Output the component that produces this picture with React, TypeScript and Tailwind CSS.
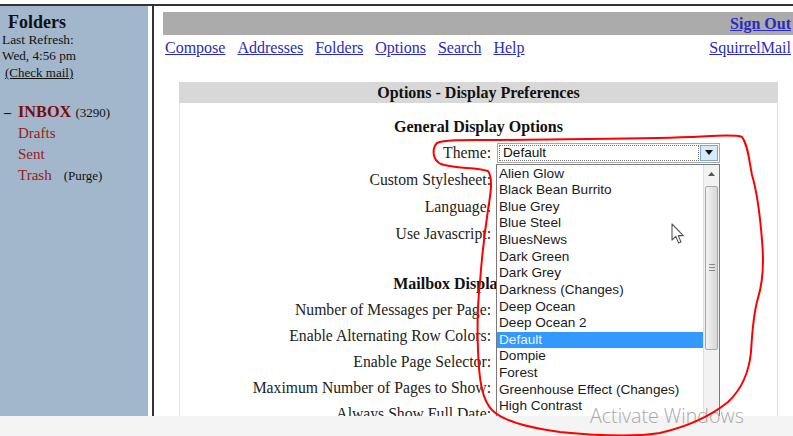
import React from "react";

const themes = [
  "Alien Glow",
  "Black Bean Burrito",
  "Blue Grey",
  "Blue Steel",
  "BluesNews",
  "Dark Green",
  "Dark Grey",
  "Darkness (Changes)",
  "Deep Ocean",
  "Deep Ocean 2",
  "Default",
  "Dompie",
  "Forest",
  "Greenhouse Effect (Changes)",
  "High Contrast",
  "Ice Fire",
  "In The Pink",
];

const serif = { fontFamily: '"Liberation Serif", "Times New Roman", serif' };
const sans = { fontFamily: '"Liberation Sans", Arial, sans-serif' };

function Label({ children }: { children: React.ReactNode }) {
  return (
    <div className="flex h-[26px] items-center">
      <div className="w-[311px] text-right text-[15.7px] text-[#222]">{children}</div>
    </div>
  );
}

function Label27({ children, extra }: { children: React.ReactNode; extra?: React.ReactNode }) {
  return (
    <div className="flex h-[27px] items-center">
      <div className="w-[311px] text-right text-[15.7px] text-[#222]">{children}</div>
      {extra}
    </div>
  );
}

function ThemeSelect() {
  return (
    <div className="relative ml-[6px] h-[20px] w-[223px] border border-[#a8a8a8] bg-white" style={sans}>
      <div className="absolute left-[1px] top-[1px] bottom-[1px] right-[20px] border border-dotted border-[#777] pl-[3px] text-[13.6px] leading-[14px] text-[#111]">
        Default
      </div>
      <div className="absolute right-[1px] top-[1px] bottom-[1px] flex w-[18px] items-center justify-center border border-[#7fa6cc] bg-[#d8e9f8]">
        <svg width="8" height="5" viewBox="0 0 8 5">
          <path d="M0 0 L8 0 L4 5 Z" fill="#111" />
        </svg>
      </div>
      <div className="absolute left-[-2px] top-[20px] flex h-[300px] w-[224px] border border-[#7a7a7a] bg-white">
        <div className="flex-1 pt-[1px]">
          {themes.map((t) => (
            <div
              key={t}
              className={
                "h-[16.64px] pl-[2px] text-[13.6px] leading-[16.64px] " +
                (t === "Default" ? "bg-[#3399ff] text-[#e8f2ff]" : "text-[#1a1a1a]")
              }
            >
              {t}
            </div>
          ))}
        </div>
        <div className="flex w-[16px] flex-col border-l border-[#e0e0e0] bg-[#f2f2f2]">
          <div className="flex h-[18px] items-center justify-center">
            <svg width="7" height="4" viewBox="0 0 7 4">
              <path d="M0 4 L7 4 L3.5 0 Z" fill="#555" />
            </svg>
          </div>
          <div className="mx-[1px] mt-[3px] flex h-[164px] items-center justify-center rounded-[2px] border border-[#a6a6a6] bg-gradient-to-r from-[#f4f4f4] to-[#d6d6d6]">
            <div className="flex flex-col gap-[2px]">
              <div className="h-px w-[6px] bg-[#888]" />
              <div className="h-px w-[6px] bg-[#888]" />
              <div className="h-px w-[6px] bg-[#888]" />
            </div>
          </div>
        </div>
      </div>
    </div>
  );
}

export default function App() {
  return (
    <div className="relative h-[436px] w-[793px] overflow-hidden bg-white" style={serif}>
      <div className="h-[4px] bg-white" />
      <div className="h-[2px] bg-[#333]" />
      <div className="flex h-[410px]">
        <aside className="w-[148px] bg-[#a2b7cb] text-[#111]">
          <div className="mt-[6px] h-[20px] pl-[8px] text-[18px] font-bold leading-[20px]">Folders</div>
          <div className="h-[16px] pl-[2px] text-[13.4px] leading-[16px]">Last Refresh:</div>
          <div className="h-[16px] pl-[2px] text-[13.2px] leading-[16px]">Wed, 4:56 pm</div>
          <div className="mt-[1px] h-[16px] pl-[5px] text-[13px] leading-[16px]">
            <span className="underline">(Check mail)</span>
          </div>
          <div className="mt-[21px] flex h-[21px] items-center">
            <span className="w-[18px] pl-[4px] text-[14px] font-bold">–</span>
            <span className="text-[16.3px] font-bold text-[#7a0c0c]">INBOX</span>
            <span className="ml-[4px] text-[13px]">(3290)</span>
          </div>
          <div className="flex h-[21px] items-center pl-[18px] text-[15px] text-[#981a1a]">Drafts</div>
          <div className="flex h-[21px] items-center pl-[18px] text-[15px] text-[#981a1a]">Sent</div>
          <div className="flex h-[21px] items-center pl-[18px]">
            <span className="text-[15px] text-[#981a1a]">Trash</span>
            <span className="ml-[12px] text-[13px]">(Purge)</span>
          </div>
        </aside>
        <div className="w-[4px] bg-white" />
        <div className="w-[2px] bg-[#333]" />
        <main className="relative flex-1 overflow-hidden">
          <div className="ml-[9px] mt-[6px] flex h-[23px] items-center justify-end bg-[#ababab] pr-[2px]">
            <span className="text-[16px] font-bold text-[#2a2ac4] underline">Sign Out</span>
          </div>
          <div className="ml-[11px] mt-[4px] flex h-[18px] items-center pr-[2px] text-[16px] leading-[18px] text-[#2a2ac4]">
            <div className="flex gap-[12px]">
              <span className="underline">Compose</span>
              <span className="underline">Addresses</span>
              <span className="underline">Folders</span>
              <span className="underline">Options</span>
              <span className="underline">Search</span>
              <span className="underline">Help</span>
            </div>
            <span className="ml-auto underline">SquirrelMail</span>
          </div>
          <div className="ml-[25px] mt-[25px] w-[599px]">
            <div className="h-[21px] bg-[#d8d8d8] text-center text-[16px] font-bold leading-[21px] text-[#111]">
              Options - Display Preferences
            </div>
            <div className="h-[400px] border-x border-[#e2e2ea] pt-[12px]">
              <div className="flex h-[24px] items-center justify-center text-[16px] font-bold text-[#111]">
                General Display Options
              </div>
              <Label27 extra={<ThemeSelect />}>Theme:</Label27>
              <Label27>Custom Stylesheet:</Label27>
              <Label27>Language:</Label27>
              <Label27>Use Javascript:</Label27>
              <div className="h-[24px]" />
              <div className="flex h-[26px] items-center justify-center text-[16px] font-bold text-[#111]">
                Mailbox Display Options
              </div>
              <Label>Number of Messages per Page:</Label>
              <Label>Enable Alternating Row Colors:</Label>
              <Label>Enable Page Selector:</Label>
              <Label>Maximum Number of Pages to Show:</Label>
              <Label>Always Show Full Date:</Label>
            </div>
          </div>
        </main>
      </div>
      <div className="h-[20px] bg-[#f4f4f4]" />

      <div
        className="absolute left-[590px] top-[402px] text-[19.6px] font-light leading-[28px] text-[#a9a9a9]"
        style={{ fontFamily: '"Open Sans", "Liberation Sans", sans-serif' }}
      >
        Activate Windows
      </div>

      <svg className="pointer-events-none absolute left-[671px] top-[223px]" width="14" height="22" viewBox="0 0 14 22">
        <path d="M1 1 L1 17 L4.8 13.4 L7.6 20 L10 19 L7.3 12.6 L12.3 12.6 Z" fill="#fff" stroke="#555" strokeWidth="1.1" strokeLinejoin="round" />
      </svg>

      <svg className="pointer-events-none absolute left-0 top-0" width="793" height="436" viewBox="0 0 793 436">
        <path
          d="M480 282 C482 255 485 230 488 210 C491 192 493 178 488 171 C475 167 455 169 441 164 C432 160 432 148 437 143 C445 139 470 140 500 140 C560 139 640 139 690 137 C715 136 735 134 742 137 C748 145 749 160 752 175 C758 195 760 215 762 240 C764 262 763 282 758 298 C753 315 752 335 751 352 C749 372 743 388 728 402 C712 415 690 426 660 433 C635 437 600 436 560 432 C530 428 505 422 493 411 C482 401 479 380 478 350 C477 325 478 300 480 282 Z"
          fill="none"
          stroke="#ff0000"
          strokeWidth="2"
          strokeLinejoin="round"
        />
      </svg>
    </div>
  );
}
